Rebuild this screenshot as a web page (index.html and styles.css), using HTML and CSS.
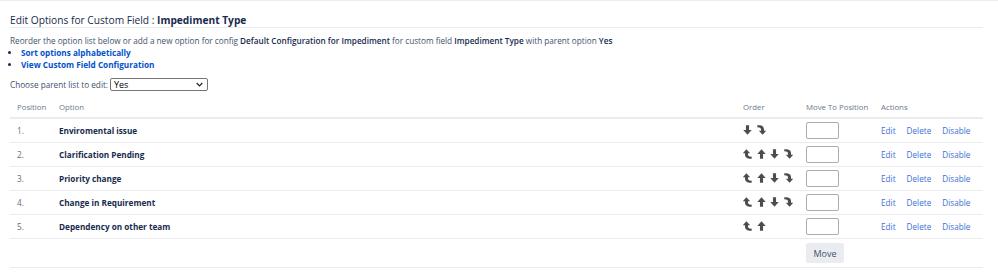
FILE: index.html
```html
<!DOCTYPE html>
<html>
<head>
<meta charset="utf-8">
<link rel="stylesheet" href="styles.css">
</head>
<body>
<svg width="0" height="0" class="defs">
  <defs>
    <symbol id="i-up" viewBox="0 0 8 9"><path d="M4 0.3 L7.8 4.4 L5.4 4.4 L5.4 8.7 L2.6 8.7 L2.6 4.4 L0.2 4.4 Z"/></symbol>
    <symbol id="i-down" viewBox="0 0 8 9"><path d="M4 8.7 L7.8 4.6 L5.4 4.6 L5.4 0.3 L2.6 0.3 L2.6 4.6 L0.2 4.6 Z"/></symbol>
    <symbol id="i-first" viewBox="0 0 8 9"><path d="M3 0.3 L6.4 3.9 L4.4 3.9 L4.4 5 Q4.4 6.4 6 6.7 L7.8 6.9 L7.8 8.8 L5.6 8.7 Q1.7 8.3 1.7 5 L1.7 3.9 L-0.4 3.9 Z"/></symbol>
    <symbol id="i-last" viewBox="0 0 8 9"><path d="M5 8.7 L8.4 5.1 L6.3 5.1 L6.3 4 Q6.3 0.7 2.4 0.3 L0.2 0.2 L0.2 2.1 L2 2.3 Q3.6 2.6 3.6 4 L3.6 5.1 L1.6 5.1 Z"/></symbol>
  </defs>
</svg>
<div class="page">
  <h2 class="title">Edit Options for Custom Field : <b>Impediment Type</b></h2>
  <p class="desc">Reorder the option list below or add a new option for config <b>Default Configuration for Impediment</b> for custom field <b>Impediment Type</b> with parent option <b>Yes</b></p>
  <ul class="links">
    <li><a href="#">Sort options alphabetically</a></li>
    <li><a href="#">View Custom Field Configuration</a></li>
  </ul>
  <div class="parent">
    <label>Choose parent list to edit:</label>
    <div class="sel"><span>Yes</span><svg class="caret" viewBox="0 0 8 5"><path d="M0.8 0.8 L4 4 L7.2 0.8" fill="none" stroke="#222" stroke-width="1.4"/></svg></div>
  </div>
  <table class="opts">
    <thead>
      <tr><th class="c-pos">Position</th><th class="c-opt">Option</th><th class="c-ord">Order</th><th class="c-move">Move To Position</th><th class="c-act">Actions</th></tr>
    </thead>
    <tbody>
      <tr><td class="c-pos">1.</td><td class="c-opt"><b>Enviromental issue</b></td>
        <td class="c-ord"><span class="ico"><svg><use href="#i-down"/></svg></span><span class="ico"><svg><use href="#i-last"/></svg></span></td>
        <td class="c-move"><input class="pos-in" type="text"></td>
        <td class="c-act"><a href="#">Edit</a><a href="#">Delete</a><a href="#">Disable</a></td></tr>
      <tr><td class="c-pos">2.</td><td class="c-opt"><b>Clarification Pending</b></td>
        <td class="c-ord"><span class="ico"><svg><use href="#i-first"/></svg></span><span class="ico"><svg><use href="#i-up"/></svg></span><span class="ico"><svg><use href="#i-down"/></svg></span><span class="ico"><svg><use href="#i-last"/></svg></span></td>
        <td class="c-move"><input class="pos-in" type="text"></td>
        <td class="c-act"><a href="#">Edit</a><a href="#">Delete</a><a href="#">Disable</a></td></tr>
      <tr><td class="c-pos">3.</td><td class="c-opt"><b>Priority change</b></td>
        <td class="c-ord"><span class="ico"><svg><use href="#i-first"/></svg></span><span class="ico"><svg><use href="#i-up"/></svg></span><span class="ico"><svg><use href="#i-down"/></svg></span><span class="ico"><svg><use href="#i-last"/></svg></span></td>
        <td class="c-move"><input class="pos-in" type="text"></td>
        <td class="c-act"><a href="#">Edit</a><a href="#">Delete</a><a href="#">Disable</a></td></tr>
      <tr><td class="c-pos">4.</td><td class="c-opt"><b>Change in Requirement</b></td>
        <td class="c-ord"><span class="ico"><svg><use href="#i-first"/></svg></span><span class="ico"><svg><use href="#i-up"/></svg></span><span class="ico"><svg><use href="#i-down"/></svg></span><span class="ico"><svg><use href="#i-last"/></svg></span></td>
        <td class="c-move"><input class="pos-in" type="text"></td>
        <td class="c-act"><a href="#">Edit</a><a href="#">Delete</a><a href="#">Disable</a></td></tr>
      <tr><td class="c-pos">5.</td><td class="c-opt"><b>Dependency on other team</b></td>
        <td class="c-ord"><span class="ico"><svg><use href="#i-first"/></svg></span><span class="ico"><svg><use href="#i-up"/></svg></span></td>
        <td class="c-move"><input class="pos-in" type="text"></td>
        <td class="c-act"><a href="#">Edit</a><a href="#">Delete</a><a href="#">Disable</a></td></tr>
      <tr class="btn-row"><td></td><td></td><td></td><td class="c-move"><button class="move-btn">Move</button></td><td></td></tr>
    </tbody>
  </table>
</div>
</body>
</html>
```
FILE: styles.css
```css
html, body {
  margin: 0;
  padding: 0;
  background: #fff;
}
body {
  font-family: "Open Sans", "Noto Sans", sans-serif;
  font-size: 8.2px;
  color: #172b4d;
  border-top: 1px solid #ebecf0;
}
.defs { position: absolute; }
.page {
  padding: 0 15px 0 10px;
}
.title {
  margin: 0;
  padding: 13px 0 1px 0;
  font-size: 10.2px;
  font-weight: 500;
  line-height: 12px;
  color: #172b4d;
  border-bottom: 1px solid #ebecf0;
}
.title b { font-weight: 700; }
.desc {
  margin: 7px 0 0 0;
  color: #42526e;
  line-height: 12px;
  font-size: 8.2px;
  white-space: nowrap;
}
.desc b { color: #172b4d; font-weight: 600; }
.links {
  margin: 0;
  padding: 0 0 0 11px;
  line-height: 12px;
}
.links li { color: #172b4d; }
.links a {
  color: #0052cc;
  font-weight: 700;
  text-decoration: none;
}
.parent {
  display: flex;
  align-items: center;
  gap: 2px;
  margin-top: 7px;
  color: #42526e;
  height: 13px;
}
.sel {
  box-sizing: border-box;
  width: 98px;
  height: 13px;
  border: 1px solid #767676;
  border-radius: 2px;
  background: #fff;
  color: #000;
  display: flex;
  align-items: center;
  justify-content: space-between;
  padding: 0 4px 0 3px;
  font-size: 9px;
}
.caret { width: 7px; height: 5px; display: block; }
.opts {
  width: 100%;
  border-collapse: collapse;
  margin-top: 5px;
}
.opts th {
  font-weight: 400;
  color: #6b778c;
  text-align: left;
  height: 21px;
  padding: 0;
  border-bottom: 2px solid #ebecf0;
  font-size: 7.8px;
  white-space: nowrap;
}
.opts td {
  height: 23px;
  padding: 0;
  border-bottom: 1px solid #ebecf0;
  color: #5e6c84;
  vertical-align: middle;
  white-space: nowrap;
}
.opts td b { color: #172b4d; font-weight: 700; }
.c-pos { width: 42px; padding-left: 7px !important; }
.c-ord { width: 63px; }
.c-move { width: 75px; }
.c-act { width: 102px; }
.c-act a {
  color: #3b6fd4;
  text-decoration: none;
  margin-right: 11px;
}
.ico {
  display: inline-block;
  width: 9px;
  height: 10px;
  margin-right: 4.6px;
  vertical-align: -1px;
}
.ico svg {
  width: 9px;
  height: 10px;
  fill: #4a4d52;
  display: block;
}
.pos-in {
  box-sizing: border-box;
  width: 33px;
  height: 17px;
  border: 1px solid #ababab;
  border-radius: 2px;
  padding: 0;
  margin: 0;
  display: block;
}
.btn-row td { height: 28px; }
.move-btn {
  font-family: inherit;
  font-size: 9px;
  color: #42526e;
  background: #ebecf0;
  border: none;
  border-radius: 2px;
  width: 38px;
  height: 20px;
  padding: 0;
  display: block;
}
```
